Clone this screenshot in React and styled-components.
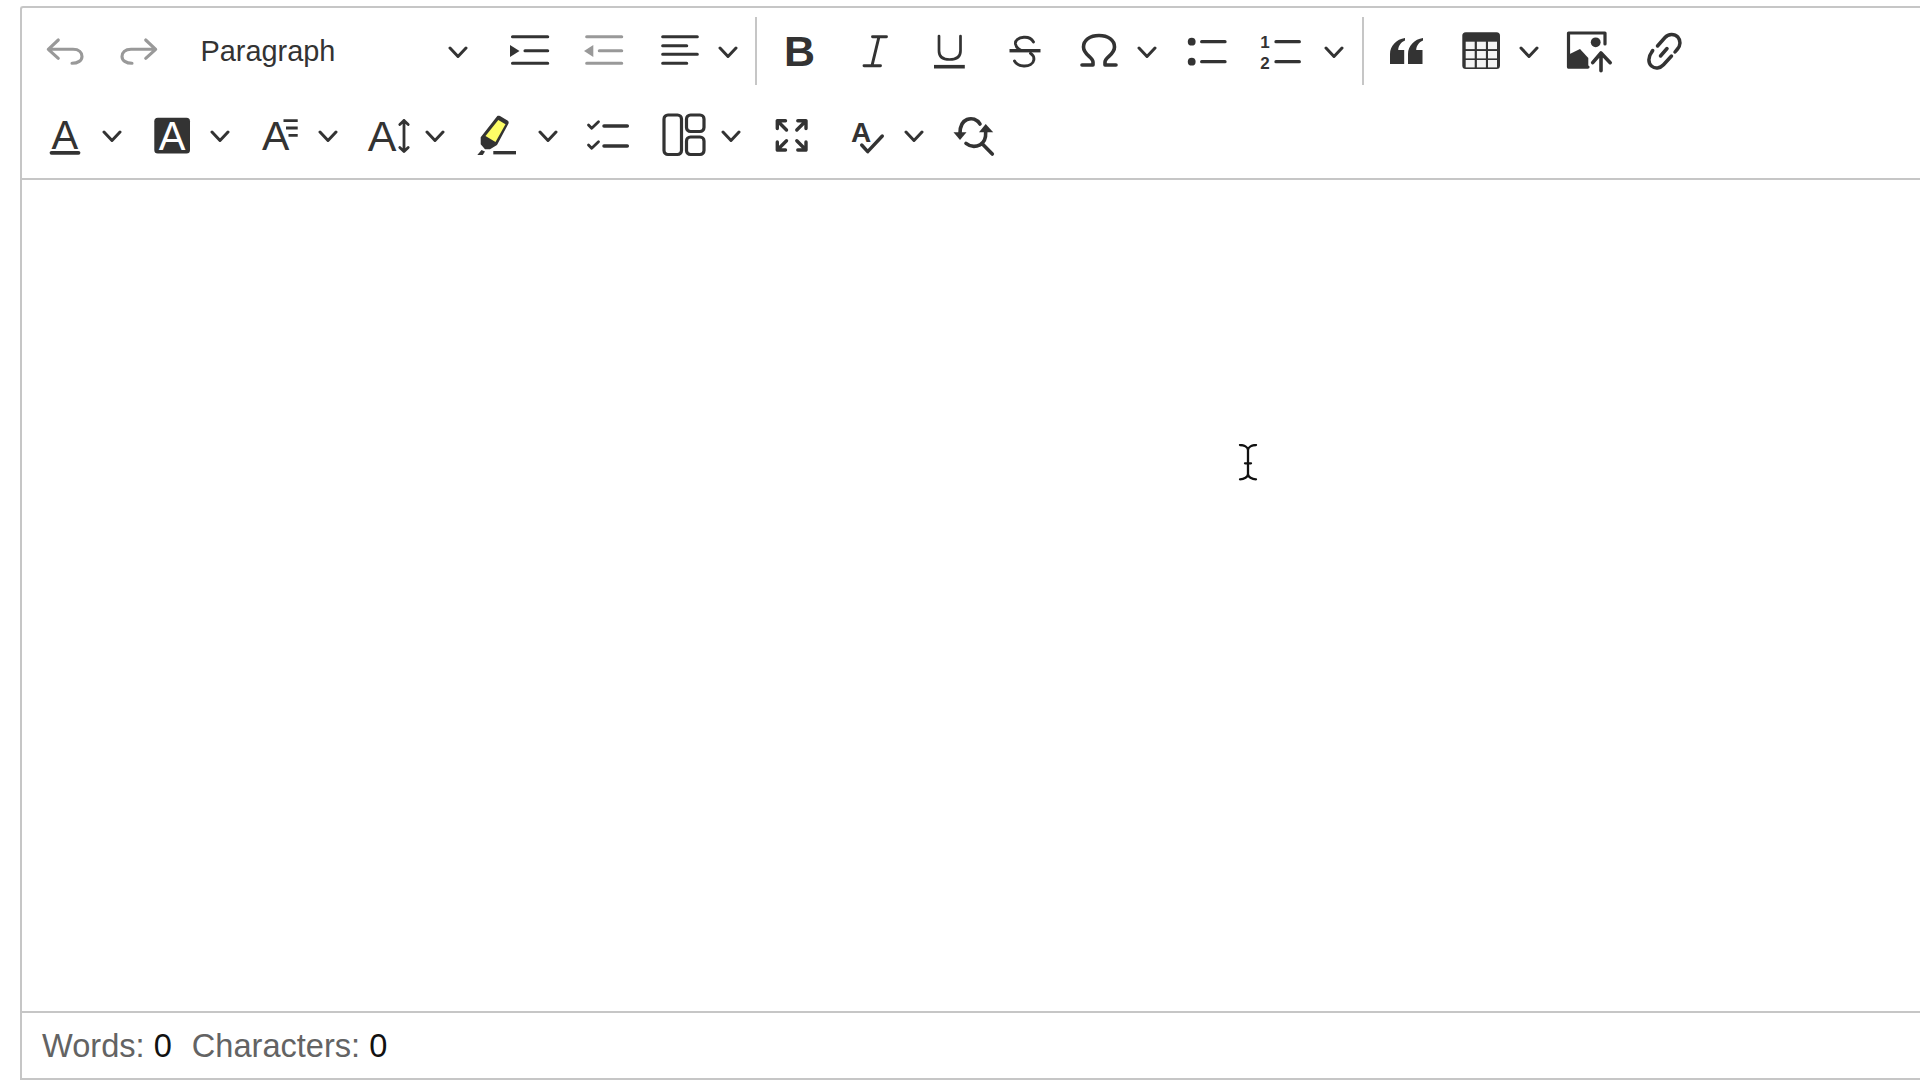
import React from "react";
import styled, { createGlobalStyle } from "styled-components";

const GlobalStyle = createGlobalStyle`
  html, body {
    margin: 0;
    height: 100%;
    overflow: hidden;
    background: #fff;
  }
  #root {
    height: 100%;
  }
`;

const Page = styled.div`
  height: 100%;
  box-sizing: border-box;
  padding: 6px 0 0 20px;
  font-family: "Liberation Sans", Arial, sans-serif;
`;

const Editor = styled.div`
  height: 100%;
  box-sizing: border-box;
  display: flex;
  flex-direction: column;
  border: 2px solid #c6c6c6;
  border-right: 0;
  border-top-left-radius: 3px;
`;

const Toolbar = styled.div`
  display: flex;
  flex-direction: column;
  gap: 44px;
  padding: 23px 0 23px 23px;
  border-bottom: 2px solid #c6c6c6;
`;

const ToolRow = styled.div`
  display: flex;
  align-items: center;
  height: 40px;
`;

const Tool = styled.svg.attrs({ viewBox: "0 0 40 40" })`
  flex: none;
  width: 40px;
  height: 40px;
  margin-left: ${(p) => p.$gap || 0}px;
  overflow: visible;
  fill: none;
  stroke: currentColor;
  stroke-width: 3.1;
  stroke-linecap: round;
  stroke-linejoin: round;
  color: ${(p) => (p.$disabled ? "#999" : "#333")};

  text {
    fill: currentColor;
    stroke: none;
    font-family: "Liberation Sans", Arial, sans-serif;
    text-anchor: middle;
  }
  .solid {
    fill: currentColor;
    stroke: none;
  }
`;

const ChevronIcon = styled.svg.attrs({ viewBox: "0 0 20 40" })`
  flex: none;
  width: 20px;
  height: 40px;
  margin-left: ${(p) => p.$gap || 0}px;
  fill: none;
  stroke: #333;
  stroke-width: 3;
  stroke-linecap: round;
  stroke-linejoin: round;
`;

const Chevron = ({ gap }) => (
  <ChevronIcon $gap={gap}>
    <path d="M2 17 L10 25.5 L18 17" />
  </ChevronIcon>
);

const Separator = styled.span`
  flex: none;
  width: 2px;
  height: 68px;
  margin-left: ${(p) => p.$gap}px;
  background: #c6c6c6;
`;

const HeadingDropdown = styled.div`
  flex: none;
  display: flex;
  align-items: center;
  justify-content: space-between;
  width: 267.5px;
  margin-left: 42px;
  font-size: 28.9px;
  color: #333;
`;

const EditArea = styled.div`
  position: relative;
  flex: 1;
`;

const TextCursor = styled.svg.attrs({ viewBox: "0 0 20 38" })`
  position: absolute;
  left: 1216px;
  top: 264px;
  width: 20px;
  height: 38px;
  fill: none;
  stroke: #111;
  stroke-width: 2.3;
  stroke-linecap: round;
`;

const StatusBar = styled.div`
  display: flex;
  align-items: center;
  gap: 20px;
  height: 65px;
  padding-left: 20px;
  border-top: 2px solid #c6c6c6;
  font-size: 32.6px;
  color: #636363;
`;

const Count = styled.span`
  color: #111;
`;

const Undo = ({ gap }) => (
  <Tool $gap={gap} $disabled>
    <path d="M13.3 9 L3.3 18.3 L13.3 27.3 M3.3 18.3 H28 C34 18.3 37 21.5 37 25.5 C37 29.5 33 32.3 27 32.3" />
  </Tool>
);

const Redo = ({ gap }) => (
  <Tool $gap={gap} $disabled>
    <path d="M26.7 9 L36.7 18.3 L26.7 27.3 M36.7 18.3 H12 C6 18.3 3 21.5 3 25.5 C3 29.5 7 32.3 13 32.3" />
  </Tool>
);

const Indent = ({ gap }) => (
  <Tool $gap={gap}>
    <path d="M3.5 5.7 H38.7 M16 19.7 H38.7 M3.5 32.3 H38.7" />
    <path className="solid" d="M1 14 L10.5 20 L1 26 Z" />
  </Tool>
);

const Outdent = ({ gap }) => (
  <Tool $gap={gap} $disabled>
    <path d="M3.7 5.7 H38.7 M16.3 19.7 H38.7 M3.7 32.3 H38.7" />
    <path className="solid" d="M10.3 14 L1 20 L10.3 26 Z" />
  </Tool>
);

const AlignLeft = ({ gap }) => (
  <Tool $gap={gap}>
    <path d="M2.7 5.7 H37.3 M2.7 14.7 H26.7 M2.7 23.3 H37.3 M2.7 32.3 H26.7" />
  </Tool>
);

const Bold = ({ gap }) => (
  <Tool $gap={gap}>
    <text x="20.5" y="35" fontSize="43" fontWeight="700">B</text>
  </Tool>
);

const Italic = ({ gap }) => (
  <Tool $gap={gap}>
    <path d="M17.5 5.7 H31.5 M24 5.7 L17 34.7 M9 34.7 H25.5" strokeWidth="2.9" />
  </Tool>
);

const Underline = ({ gap }) => (
  <Tool $gap={gap}>
    <path d="M10 5 V20 C10 26 14 28.5 20.5 28.5 C27 28.5 31.5 26 31.5 20 V5" strokeWidth="2.7" />
    <path d="M5 35.7 H35.8" strokeWidth="3.6" strokeLinecap="butt" />
  </Tool>
);

const Strike = ({ gap }) => (
  <Tool $gap={gap}>
    <path d="M4.5 19.7 H35.5" strokeWidth="3.4" strokeLinecap="butt" />
    <path d="M28.5 11 C26.5 7.5 22.5 6 18.8 6.3 C13.5 6.7 10 9.5 10.5 13 C11 16 13 17.8 15.5 19 M25.5 22.3 C28 24 29.3 26 28.8 29 C28.2 33 24 35.2 18.8 35 C14.5 34.8 11 32.8 9.5 30" strokeWidth="2.9" />
  </Tool>
);

const Omega = ({ gap }) => (
  <Tool $gap={gap}>
    <path d="M3 34 H14 V31 C14 26 4.5 24 4.5 16 C4.5 9 11 4.5 20 4.5 C29 4.5 35.5 9 35.5 16 C35.5 24 26 26 26 31 V34 H37" strokeWidth="3.6" />
  </Tool>
);

const BulletList = ({ gap }) => (
  <Tool $gap={gap}>
    <circle className="solid" cx="5.7" cy="10.7" r="3.9" />
    <circle className="solid" cx="5.7" cy="30.7" r="3.9" />
    <path d="M15.7 10.7 H39 M15.7 30.7 H39" strokeWidth="3.3" />
  </Tool>
);

const NumberedList = ({ gap }) => (
  <Tool $gap={gap}>
    <text x="5" y="16.5" fontSize="17" fontWeight="700">1</text>
    <text x="5" y="38" fontSize="17" fontWeight="700">2</text>
    <path d="M16 10.7 H39.3 M16 30.7 H39.3" strokeWidth="3.3" />
  </Tool>
);

const Quote = ({ gap }) => (
  <Tool $gap={gap}>
    <path className="solid" d="M4 33 V23 C4 15 10.5 8 19 7 L19 9.5 C15 11 12.5 14.5 12.2 19 H18.2 V33 Z" />
    <path className="solid" d="M22 33 V23 C22 15 28.5 8 37 7 L37 9.5 C33 11 30.5 14.5 30.2 19 H36.5 V33 Z" />
  </Tool>
);

const Table = ({ gap }) => (
  <Tool $gap={gap}>
    <rect className="solid" x="1.3" y="1.3" width="37.7" height="36.7" rx="3.5" />
    {[4.7, 15.9, 27].map((x) =>
      [10.7, 20, 29].map((y) => (
        <rect key={`${x}-${y}`} x={x} y={y} width="9" height="7.4" fill="#f4f4f4" stroke="none" />
      ))
    )}
  </Tool>
);

const ImageUpload = ({ gap }) => (
  <Tool $gap={gap}>
    <g transform="translate(-3 0)">
      <path d="M22 36 H2.5 V2 H39 V13" strokeWidth="3.2" />
      <path className="solid" d="M1.7 24 L14 18 L22.3 27 V37.5 H1.7 Z" />
      <circle className="solid" cx="29.7" cy="11.3" r="4.9" />
      <path d="M26.7 31.7 L35 22 L44.2 31.7 M35 22.3 V39.7" strokeWidth="3.6" />
    </g>
  </Tool>
);

const Link = ({ gap }) => (
  <Tool $gap={gap}>
    <path d="M13.5 15 L21 6.5 C24.5 2.5 30.5 2.5 33.8 6 C37 9.5 36.5 14.5 33.5 18 L31 21" strokeWidth="3.5" />
    <path d="M8.7 19.5 L7.5 21.5 C4 26 4 31.5 7.5 35 C11 38 16 37.5 19.5 33.7 L27.5 25" strokeWidth="3.5" />
    <path d="M16.5 25 L23 17.5" strokeWidth="3.5" />
  </Tool>
);

const FontColor = ({ gap }) => (
  <Tool $gap={gap}>
    <text x="19.8" y="34" fontSize="40">A</text>
    <path d="M6.5 37.8 H33.5" strokeWidth="3.8" />
  </Tool>
);

const FontBackground = ({ gap }) => (
  <Tool $gap={gap}>
    <rect className="solid" x="2.3" y="2.7" width="35.7" height="35.7" rx="3.5" />
    <text x="20" y="34.5" fontSize="40" style={{ fill: "#fff" }}>A</text>
  </Tool>
);

const FontFamily = ({ gap }) => (
  <Tool $gap={gap}>
    <text x="16.8" y="35" fontSize="41">A</text>
    <path d="M24.5 5.7 H38.7 M27 13 H38.7 M29.5 20.3 H38.7" strokeWidth="2.8" strokeLinecap="butt" />
  </Tool>
);

const FontSize = ({ gap }) => (
  <Tool $gap={gap}>
    <text x="14" y="35.5" fontSize="43">A</text>
    <path d="M36 5.5 V36.5 M31.8 9.5 L36 5.5 L40.2 9.5 M31.8 32.5 L36 36.5 L40.2 32.5" strokeWidth="2.8" />
  </Tool>
);

const Highlight = ({ gap }) => (
  <Tool $gap={gap}>
    <path className="solid" d="M21.3 1 C22 0.5 23 0.5 24 1 L31.5 5.5 C32.5 6 33 7.5 32.5 8.5 L21 30 L14 34.3 L9 34.3 L4.7 29.3 L4.7 22.3 Z" />
    <path d="M22.3 5 L29.5 9.3 L19.5 27 L9.5 21 Z" fill="#fdfd66" stroke="none" />
    <path className="solid" d="M1.3 40 L5.5 35 L9 36.5 L6.7 40 Z" />
    <path d="M17.3 37.7 H40" strokeWidth="3.4" strokeLinecap="butt" />
  </Tool>
);

const TodoList = ({ gap }) => (
  <Tool $gap={gap}>
    <path d="M0.5 10 L3.7 13.3 L10.5 6.7 M0.5 30 L3.7 33.3 L10.5 26.7" strokeWidth="2.8" />
    <path d="M16 11 H39.3 M16 31 H39.3" strokeWidth="3.5" />
  </Tool>
);

const PageLayout = ({ gap }) => (
  <Tool $gap={gap}>
    <rect x="0" y="0" width="17.5" height="39.5" rx="4" strokeWidth="3.2" />
    <rect x="22.5" y="0" width="17.5" height="16.5" rx="4" strokeWidth="3.2" />
    <rect x="22.5" y="22" width="17.5" height="17.5" rx="4" strokeWidth="3.2" />
  </Tool>
);

const Fullscreen = ({ gap }) => (
  <Tool $gap={gap}>
    <path d="M5.3 13.5 V5.7 H13.5 M5.3 5.7 L14.5 15 M34 13.5 V5.7 H25.8 M34 5.7 L24.8 15 M5.3 27 V35 H13.5 M5.3 35 L14.5 25.7 M34 27 V35 H25.8 M34 35 L24.8 25.7" strokeWidth="3.4" />
  </Tool>
);

const SpellCheck = ({ gap }) => (
  <Tool $gap={gap}>
    <text x="14" y="27" fontSize="28" fontWeight="700">A</text>
    <path d="M14.7 30 L20.7 36.7 L35.3 21" strokeWidth="3.4" />
  </Tool>
);

const FindReplace = ({ gap }) => (
  <Tool $gap={gap}>
    <path d="M26 9 C23 4.5 18 2.5 13 4.5 C8.5 6.3 6 11 6 18.3 M12 28.3 C16 31.5 21.5 32 26 29.8 C30 27.8 32 23 31.7 16.7 M27.7 28.3 L38.3 39" strokeWidth="3.6" />
    <path className="solid" d="M-0.5 17.2 H12.5 L6 25 Z" />
    <path className="solid" d="M25 17.2 H39.2 L31.7 9 Z" />
  </Tool>
);

const App = () => (
  <Page>
    <GlobalStyle />
    <Editor>
      <Toolbar>
        <ToolRow>
          <Undo />
          <Redo gap={33.5} />
          <HeadingDropdown>
            Paragraph
            <Chevron />
          </HeadingDropdown>
          <Indent gap={41} />
          <Outdent gap={34} />
          <AlignLeft gap={37} />
          <Chevron gap={18} />
          <Separator $gap={17} />
          <Bold gap={22} />
          <Italic gap={35.5} />
          <Underline gap={34} />
          <Strike gap={36} />
          <Omega gap={34.5} />
          <Chevron gap={18} />
          <BulletList gap={29} />
          <NumberedList gap={34} />
          <Chevron gap={24} />
          <Separator $gap={18} />
          <Quote gap={22} />
          <Table gap={35} />
          <Chevron gap={18} />
          <ImageUpload gap={30} />
          <Link gap={35} />
        </ToolRow>
        <ToolRow>
          <FontColor />
          <Chevron gap={16.5} />
          <FontBackground gap={30} />
          <Chevron gap={18} />
          <FontFamily gap={29} />
          <Chevron gap={19} />
          <FontSize gap={30} />
          <Chevron gap={17} />
          <Highlight gap={31} />
          <Chevron gap={22} />
          <TodoList gap={30} />
          <PageLayout gap={36.5} />
          <Chevron gap={16.5} />
          <Fullscreen gap={31} />
          <SpellCheck gap={35} />
          <Chevron gap={17} />
          <FindReplace gap={30} />
        </ToolRow>
      </Toolbar>
      <EditArea>
        <TextCursor>
          <path d="M2 1 C6 1 10 3 10 6 C10 3 14 1 18 1 M10 6 V30 M2 35.3 C6 35.3 10 33 10 30 C10 33 14 35.3 18 35.3 M7 19.3 H13" />
        </TextCursor>
      </EditArea>
      <StatusBar>
        <span>Words: <Count>0</Count></span>
        <span>Characters: <Count>0</Count></span>
      </StatusBar>
    </Editor>
  </Page>
);

export default App;
